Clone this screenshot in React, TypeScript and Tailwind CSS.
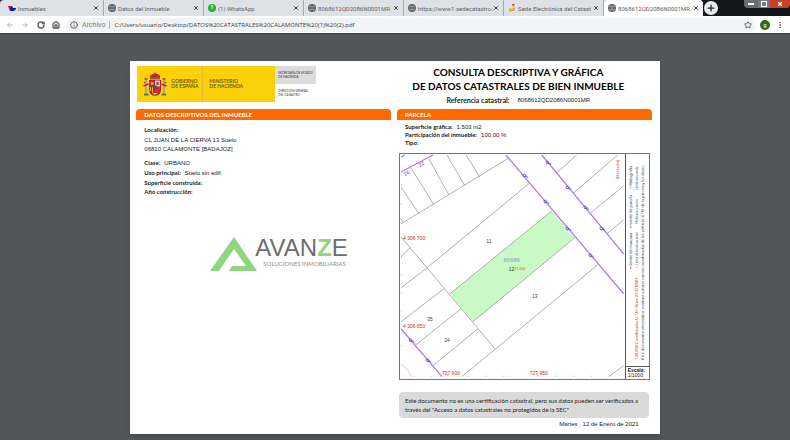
import type { ReactNode } from "react";
import { ArrowLeft, ArrowRight, Globe, House, Info, MoreVertical, Plus, RotateCw, Star, X } from "lucide-react";

type Tab = { title: string; icon: ReactNode; active?: boolean };

const globe = <Globe className="size-2 shrink-0 text-[#5f6368]" strokeWidth={4} />;

const tabs: Tab[] = [
  {
    title: "Inmuebles",
    icon: (
      <svg viewBox="0 0 8 8" className="size-2 shrink-0">
        <path d="M0 2h4l1 2h3v1L6 7H2L1 4z" fill="#1414b8" />
        <path d="M0 2h3v1.500H1z" fill="#d22" />
      </svg>
    ),
  },
  { title: "Datos del Inmueble", icon: globe },
  {
    title: "(1) WhatsApp",
    icon: (
      <span className="flex size-2 shrink-0 items-center justify-center rounded-full bg-[#1cb83c] text-[5px] font-bold text-white">1</span>
    ),
  },
  { title: "8068612QD2086N0001MR.", icon: globe },
  { title: "https://www1.sedecatastro.", icon: globe },
  {
    title: "Sede Electrónica del Catast",
    icon: (
      <svg viewBox="0 0 8 8" className="size-2 shrink-0">
        <path d="M1 4l2 1 2-2-1 4-3 1z" fill="#f4b400" />
        <path d="M4 0h3L5 3z" fill="#e0452b" />
        <path d="M6 3l1 1-1 3H4z" fill="#e9962d" />
      </svg>
    ),
  },
  { title: "8068612QD2086N0001MR.", icon: globe, active: true },
];

// parcel boundaries, in map units
const boundaries = [
  "M402 224L510 158",
  "M402 187L420 214",
  "M412 168L435 205",
  "M430 159L450 195",
  "M448 155L466 186",
  "M467 155L481 177",
  "M531 183L428 268L402 288",
  "M402 237L496 349",
  "M402 257L411 248",
  "M402 219L404 223",
  "M445 289L402 322",
  "M462 309L417 345",
  "M479 329L434 366",
  "M463 377L599 265",
  "M558 173L578 155",
  "M575 193L619 155",
  "M592 213L625 186",
  "M608 234L625 220",
  "M610 377L625 366",
];

const limits = ["M402 172L434 155", "M402 157L406 155", "M507 155L625 294", "M543 155L625 254", "M402 329L443 377"];

const marks = [
  [549, 163],
  [569, 188],
  [587, 208],
  [603, 229],
  [526, 176],
  [547, 202],
  [569, 229],
  [592, 256],
  [412, 341],
  [429, 361],
];

function TabItem({ title, icon, active }: Tab) {
  return (
    <li
      className={
        active
          ? "flex min-w-0 flex-1 items-center gap-0.5 rounded-t-sm bg-white px-1"
          : "flex min-w-0 flex-1 items-center gap-0.5 border-r border-[#a4a8ae] px-1"
      }
    >
      {icon}
      <button className="min-w-0 flex-1 text-left whitespace-nowrap text-[#5f6368]">{title}</button>
      <button aria-label="Cerrar pestaña">
        <X className="size-1.5 text-[#3c4043]" strokeWidth={4} />
      </button>
    </li>
  );
}

function Browser() {
  return (
    <header className="font-['Roboto','Open_Sans',sans-serif]">
      <div className="flex h-4 bg-gradient-to-r from-[#2b3036] to-[#10151c] text-[6px]">
        <ul className="flex w-[89%] rounded-t-sm bg-[#dee1e6] pl-1">
          {tabs.map((tab, i) => (
            <TabItem key={i} {...tab} />
          ))}
        </ul>
        <div className="flex flex-1 items-start justify-between">
          <button aria-label="Nueva pestaña" className="mt-px ml-px flex size-3.5 items-center justify-center rounded-full bg-[#e8eaed]">
            <Plus className="size-2.5 text-[#202124]" strokeWidth={3} />
          </button>
          <div className="flex h-2 overflow-hidden rounded-b-sm leading-none text-white">
            <button aria-label="Minimizar" className="flex w-3.5 items-center justify-center bg-[#6a6e74]">
              <span className="h-0.5 w-1.5 bg-white" />
            </button>
            <button aria-label="Restaurar" className="flex w-3 items-center justify-center bg-[#767a80]">
              <span className="size-1.5 border border-white" />
            </button>
            <button aria-label="Cerrar" className="flex w-5 items-center justify-center bg-[#c8402c]">
              <X className="size-1.5" strokeWidth={5} />
            </button>
          </div>
        </div>
      </div>
      <div className="flex h-[18px] items-center border-b border-[#3b3e41] bg-white px-1.5 text-[#5f6368]">
        <div className="flex w-[60px] shrink-0 items-center justify-between pr-1.5">
          <button aria-label="Atrás"><ArrowLeft className="size-2 text-[#b5b8bb]" strokeWidth={3} /></button>
          <button aria-label="Adelante"><ArrowRight className="size-2 text-[#b5b8bb]" strokeWidth={3} /></button>
          <button aria-label="Recargar"><RotateCw className="size-2" strokeWidth={4} /></button>
          <button aria-label="Inicio"><House className="size-2" strokeWidth={4} /></button>
        </div>
        <div className="flex h-3.5 min-w-0 flex-1 items-center gap-1 rounded-full bg-[#f1f3f4] px-1">
          <Info className="size-2 shrink-0" strokeWidth={3} />
          <span className="text-[7px] leading-[14px] text-[#7b7f83]">Archivo</span>
          <span className="h-2 w-px bg-[#b5b8bb]" />
          <input
            aria-label="Dirección"
            className="h-3.5 min-w-0 flex-1 bg-transparent font-['Open_Sans','Noto_Sans',sans-serif] text-[6px] text-[#3c4043] outline-none"
            defaultValue="C:/Users/usuario/Desktop/DATOS%20CATASTRALES%20CALAMONTE%20(1)%20(2).pdf"
          />
          <button aria-label="Favorito"><Star className="size-2" strokeWidth={3} /></button>
        </div>
        <button className="ml-1 flex size-2.5 items-center justify-center rounded-full bg-[#2c6b1f] text-[6px] text-white">g</button>
        <button aria-label="Menú" className="ml-1.5"><MoreVertical className="size-2" strokeWidth={3} /></button>
      </div>
    </header>
  );
}

function CoatOfArms() {
  return (
    <svg viewBox="0 0 24 25" className="w-6 shrink-0">
      <path d="M7 6Q6 2 12 1.500Q18 2 17 6z" fill="#c3202c" />
      <path d="M7 5.500h10v2H7z" fill="#8c6a1a" />
      <path d="M12 0v3M9 3v3M15 3v3" stroke="#8c6a1a" />
      <path d="M6 8h12v10q0 5-6 6q-6-1-6-6z" fill="#b8202f" />
      <path d="M12 8.500h5v6h-5z" fill="#e6c7bc" />
      <path d="M7.500 10h3v3h-3z" fill="#dfa91c" />
      <path d="M13.500 10h2v3h-2z" fill="#8d3360" />
      <path d="M12 15h5v3q0 3-5 5z" fill="#c8312d" />
      <path d="M7.500 15v4M9.500 15v6" stroke="#e2ae1e" />
      <path d="M9.500 21h5l-2.500 2z" fill="#eadcc0" />
      <circle cx="12" cy="15" r="1.800" fill="#324f95" />
      <path d="M3 8v13M21 8v13" stroke="#b4a68c" strokeWidth="2" />
      <path d="M1.500 7h3M19.500 7h3" stroke="#a13a1d" strokeWidth="1.500" />
      <path d="M0.500 14l5-2M18.500 12l5 2M1 11l1-1M22 10l1 1" stroke="#bd2630" strokeWidth="1.500" />
      <path d="M1 22.500h4.500M18.500 22.500H23" stroke="#3e7a62" strokeWidth="2" />
    </svg>
  );
}

function Ministry() {
  return (
    <div className="mr-1.5 ml-[7px] mt-[5px] flex h-9">
      <div className="flex w-[138px] bg-[#fdd10a] text-[5px] leading-[5px] text-[#5e5010]">
        <div className="flex w-[66px] items-center gap-1 border-r border-[#e6c02a] pl-1.5">
          <CoatOfArms />
          <p className="font-semibold">GOBIERNO<br />DE ESPAÑA</p>
        </div>
        <p className="self-center pl-1.5 font-semibold">MINISTERIO<br />DE HACIENDA</p>
      </div>
      <div className="w-[41px] text-[3px] leading-[4px] whitespace-nowrap text-[#333]">
        <p className="flex h-[18px] items-center bg-[#dcdcdc] pl-[3px]">SECRETARÍA DE ESTADO<br />DE HACIENDA</p>
        <p className="flex h-[18px] items-center pl-[3px]">DIRECCIÓN GENERAL<br />DEL CATASTRO</p>
      </div>
    </div>
  );
}

function SectionTitle({ children }: { children: ReactNode }) {
  return (
    <h2 className="h-[11px] rounded-t-sm bg-[#ff6a00] px-2 text-[6px] leading-[11px] font-bold text-white">{children}</h2>
  );
}

function Field({ label, value }: { label: string; value?: string }) {
  return (
    <div className="flex items-baseline gap-1">
      <dt className="font-bold">{label}</dt>
      <dd className="font-['Liberation_Sans',sans-serif] text-[6px]">{value}</dd>
    </div>
  );
}

function Logo() {
  return (
    <div className="mt-10 ml-20 flex items-end font-['Liberation_Sans',sans-serif]">
      <svg viewBox="0 0 47 35" className="w-[47px] shrink-0">
        <path d="M0 34L24 0L47 34H19L22 29H36L24 12L9 34z" fill="#8fd67c" />
      </svg>
      <div className="-ml-0.5">
        <p className="text-[24px] leading-[24px] text-[#6e6e70]">
          AVAN<span className="font-bold text-[#8fd67c]">Z</span>E
        </p>
        <p className="pb-1 pl-2 font-['Lato','Open_Sans',sans-serif] text-[6px] leading-[8px] whitespace-nowrap text-[#8d8d8f]">
          SOLUCIONES INMOBILIARIAS
        </p>
      </div>
    </div>
  );
}

function ParcelMap() {
  return (
    <svg viewBox="401 154 225 225" className="block min-w-0 flex-1 font-['Liberation_Sans',sans-serif]">
      <path d="M451 294L553 211L576 238L474 322z" fill="#c9fac6" />
      <g fill="none" stroke="#9c9c9c" strokeWidth="0.800">
        {boundaries.map((d) => (
          <path key={d} d={d} />
        ))}
        <path d="M451 294L553 211M576 238L474 322" />
      </g>
      <g fill="none" stroke="#b57be6" strokeWidth="1.300">
        {limits.map((d) => (
          <path key={d} d={d} />
        ))}
      </g>
      <g fill="none" stroke="#4646c8" strokeWidth="0.700">
        {marks.map(([x, y]) => (
          <path key={`${x}-${y}`} d={`M${x - 2} ${y - 1}l2-1l1 2l-2 1zM${x} ${y + 1}l2-1l1 2`} />
        ))}
      </g>
      <path d="M402 364Q409 369 413 377" fill="none" stroke="#eba6b4" strokeWidth="0.700" />
      <path
        d="M402 185h1M402 204h1M402 257h1M402 275h1M402 293h1M402 311h1M402 346h1M415 377v-1M433 377v-1M469 377v-1M487 377v-1M505 377v-1M539 377v-2M557 377v-1M575 377v-1M593 377v-1M449 377v-2"
        stroke="#999"
        strokeWidth="0.800"
      />
      <g fontSize="5" fill="#444" textAnchor="middle">
        <text x="490" y="243">11</text>
        <text x="536" y="298">13</text>
        <text x="431" y="321">35</text>
        <text x="448" y="342">34</text>
      </g>
      <g fontSize="5" fill="#4646c8">
        <text x="406" y="176" transform="rotate(-30 406 176)">26</text>
        <text x="421" y="167" transform="rotate(-30 421 167)">22</text>
      </g>
      <text x="513" y="262" fontSize="6" fill="#a08ad2" textAnchor="middle">80686</text>
      <text x="510" y="271" fontSize="5" fill="#222">12</text>
      <text x="516" y="270" fontSize="4" fill="#e0401c">(1.00)</text>
      <g fontSize="5" fill="#c92a2a">
        <text x="404" y="240">4 306 700</text>
        <text x="404" y="328">4 306 650</text>
        <text x="443" y="375">727 900</text>
        <text x="531" y="375">727 950</text>
        <text x="620" y="179" fontSize="4" transform="rotate(-90 620 179)">(Dirección)</text>
      </g>
    </svg>
  );
}

function Legend() {
  return (
    <aside className="flex w-6 shrink-0 flex-col border-l border-[#555] text-[4px] leading-[6px] text-[#444]">
      <div className="relative min-h-0 flex-1">
        <div className="absolute inset-0 rotate-180 pt-1.5 pr-0.5 pb-3 whitespace-nowrap [writing-mode:vertical-rl]">
          <p className="flex justify-end gap-1.5">
            <span><b className="text-[#a05ce0]">━</b> Límite de manzana</span>
            <span>━ Límite de parcela</span>
            <span><b className="text-[#9cc]">━</b> Hidrografía</span>
          </p>
          <p className="flex justify-between text-[3px]">
            <span className="text-[4px] text-[#d32f2f]">728.000 Coordenadas U.T.M. Huso 29 ETRS89</span>
            <span><b className="text-[#e0726a]">━</b> Límite de construcciones</span>
            <span>Mobiliario y aceras</span>
            <span>Límite zona verde</span>
          </p>
          <p>Este documento electrónico contiene valores con las coordenadas de los vértices UTM de la parcela y los datos.</p>
        </div>
      </div>
      <p className="border-t border-[#555] pt-px pb-px pl-0.5 font-['Liberation_Sans',sans-serif] text-[5px] leading-[5px] text-[#222]">
        <b>Escala:</b>
        <br />
        1/1000
      </p>
    </aside>
  );
}

export default function App() {
  return (
    <div className="flex h-screen flex-col overflow-hidden bg-[#525659]">
      <Browser />
      <main className="mx-auto mt-[27px] flex w-[67%] flex-col bg-white font-['Lato','Open_Sans',sans-serif] text-[#222] shadow-md">
        <div className="flex">
          {/* Left column - property details */}
          <section className="w-1/2">
            <Ministry />
            <div className="mt-[7px] mr-1 ml-1.5">
              <SectionTitle>DATOS DESCRIPTIVOS DEL INMUEBLE</SectionTitle>
              <dl className="mt-[5px] pl-2 text-[6px] leading-[9px]">
                <dt className="font-bold">Localización:</dt>
                <dd className="mt-0.5 mb-1 font-['Liberation_Sans',sans-serif] leading-[9px]">
                  CL JUAN DE LA CIERVA 13 Suelo
                  <br />
                  06810 CALAMONTE [BADAJOZ]
                </dd>
                <Field label="Clase:" value="URBANO" />
                <Field label="Uso principal:" value="Suelo sin edif." />
                <Field label="Superficie construida:" />
                <Field label="Año construcción:" />
              </dl>
            </div>
            <Logo />
          </section>

          {/* Right column - parcel and map */}
          <section className="w-1/2 pr-2 pl-0.5">
            <div className="pt-1 pr-3 text-center">
              <h1 className="text-[10px] leading-[14px] font-bold whitespace-nowrap text-black">
                CONSULTA DESCRIPTIVA Y GRÁFICA
                <br />
                DE DATOS CATASTRALES DE BIEN INMUEBLE
              </h1>
              <p className="mt-[3px] mb-1 flex items-center justify-center gap-2 text-[7px] leading-[9px]">
                <b>Referencia catastral:</b>
                <span className="font-['Liberation_Sans',sans-serif] text-[6px]">8068612QD2086N0001MR</span>
              </p>
            </div>
            <SectionTitle>PARCELA</SectionTitle>
            <dl className="mt-[3px] mb-1.5 pl-2 text-[6px] leading-[8px]">
              <Field label="Superficie gráfica:" value="1.503 m2" />
              <Field label="Participación del inmueble:" value="100,00 %" />
              <Field label="Tipo:" />
            </dl>
            <div className="mr-[2px] ml-[2px] flex border border-[#777]">
              <ParcelMap />
              <Legend />
            </div>
          </section>
        </div>
        <footer className="ml-auto w-1/2 pr-[11px] pb-1.5 pl-1">
          <p className="mt-3 rounded-sm bg-[#dadada] px-1.5 py-1 text-[6px] leading-[9px]">
            Este documento no es una certificación catastral, pero sus datos pueden ser verificados a través del "Acceso a datos catastrales no protegidos de la SEC"
          </p>
          <p className="mt-0.5 pr-2.5 text-right font-['Liberation_Sans',sans-serif] text-[6px] leading-[8px]">Martes , 12 de Enero de 2021</p>
        </footer>
      </main>
    </div>
  );
}
